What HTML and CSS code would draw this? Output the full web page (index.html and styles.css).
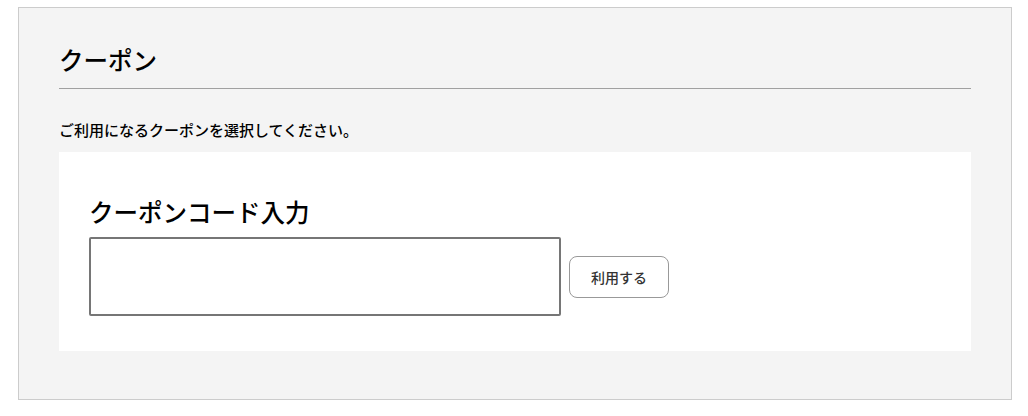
FILE: index.html
```html
<!DOCTYPE html>
<html lang="ja">
<head>
<meta charset="utf-8">
<link rel="stylesheet" href="styles.css">
</head>
<body>
<section class="coupon">
  <h1 class="coupon-title">クーポン</h1>
  <p class="coupon-lead">ご利用になるクーポンを選択してください。</p>
  <div class="coupon-panel">
    <h2 class="panel-title">クーポンコード入力</h2>
    <div class="code-row">
      <input class="code-input" type="text">
      <button class="code-button" type="button">利用する</button>
    </div>
  </div>
</section>
</body>
</html>
```
FILE: styles.css
```css
html, body {
  margin: 0;
  padding: 0;
  background: #ffffff;
}
body {
  padding: 7px 16px 0 18px;
  font-family: "Noto Sans CJK JP", "Noto Sans", sans-serif;
  color: #000;
}
.coupon {
  width: 992px;
  height: 391px;
  box-sizing: content-box;
  border: 1px solid #cccccc;
  background: #f4f4f4;
  padding: 0;
  display: flex;
  flex-direction: column;
}
.coupon-title {
  margin: 34px 40px 0 40px;
  font-size: 24.5px;
  font-weight: 500;
  line-height: 36px;
  padding-bottom: 10px;
  border-bottom: 1px solid #a0a0a0;
}
.coupon-lead {
  margin: 30px 40px 0 40px;
  font-size: 15px;
  font-weight: 500;
  line-height: 22px;
}
.coupon-panel {
  margin: 11px 40px 0 40px;
  background: #ffffff;
  padding: 42px 30px 35px 30px;
}
.panel-title {
  margin: 0;
  font-size: 24.5px;
  font-weight: 500;
  line-height: 36px;
}
.code-row {
  margin-top: 7px;
  display: flex;
  align-items: center;
  gap: 8px;
}
.code-input {
  width: 472px;
  height: 79px;
  box-sizing: border-box;
  border: 2px solid #767676;
  border-radius: 2px;
  background: #fff;
  margin: 0;
  padding: 0 8px;
  font-family: inherit;
  font-size: 16px;
}
.code-button {
  width: 100px;
  height: 42px;
  box-sizing: border-box;
  border: 1px solid #999999;
  border-radius: 8px;
  background: #ffffff;
  color: #333333;
  font-family: inherit;
  font-size: 14px;
  font-weight: 500;
  margin: 0;
  padding: 0;
}
```
